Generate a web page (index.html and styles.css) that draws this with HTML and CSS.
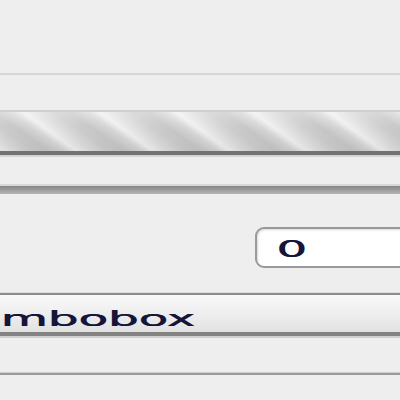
FILE: index.html
```html
<!DOCTYPE html>
<html lang="en">
<head>
    <meta charset="UTF-8">
    <meta name="viewport" content="width=device-width, initial-scale=1.0">
    <title>Widgets</title>
    <link rel="stylesheet" href="styles.css">
</head>
<body>

    <div class="page">
        <!-- top panel -->
        <div class="panel-top"></div>
        <div class="rule light"></div>

        <!-- busy progress bar -->
        <div class="progress">
            <div class="progress-fill"></div>
        </div>

        <!-- frame bottom edge -->
        <div class="frame-edge"></div>

        <!-- spin / text field -->
        <div class="field-row">
            <div class="field"><span class="stretch">0</span></div>
        </div>

        <!-- combobox -->
        <div class="rule dark"></div>
        <div class="combo">
            <span class="stretch combo-text">Combobox</span>
        </div>

        <div class="rule bottom"></div>
    </div>

</body>
</html>
```

FILE: styles.css
```css
body {
    margin: 0;
    background-color: #eeeeee;
    font-family: 'DejaVu Sans', Verdana, sans-serif;
    color: #15153a;
    overflow: hidden;
}

.page {
    width: 400px;
    height: 400px;
    overflow: hidden;
}

.panel-top {
    height: 73px;
}

.rule {
    height: 0;
}

.rule.light {
    border-top: 2px solid #d6d6d6;
}

.rule.dark {
    margin-top: 24px;
    border-top: 1px solid #dedede;
    border-bottom: 2px solid #8c8c8c;
}

.rule.bottom {
    margin-top: 36px;
    border-top: 1px solid #cfcfcf;
    border-bottom: 2px solid #9a9a9a;
}

.progress {
    margin-top: 35px;
    border-top: 2px solid #cfcfcf;
    border-bottom: 4px solid #727272;
    box-shadow: 0 2px 0 #d4d4d4;
}

.progress-fill {
    height: 39px;
    background:
        linear-gradient(to bottom, rgba(255, 255, 255, 0.3), rgba(255, 255, 255, 0) 40%, rgba(0, 0, 0, 0.05)),
        repeating-linear-gradient(36deg, #f0f0f0 0px, #dedede 9px, #cdcdcd 19px, #c7c7c7 28px, #d6d6d6 38px, #f0f0f0 45px);
}

.frame-edge {
    margin-top: 29px;
    height: 8px;
    border-top: 2px solid #d8d8d8;
    background: linear-gradient(to bottom, #858585, #b4b4b4);
}

.field-row {
    margin-top: 33px;
    padding-left: 255px;
}

.field {
    width: 180px;
    height: 37px;
    border: 2px solid #9a9a9a;
    border-radius: 9px;
    background: #ffffff;
    box-shadow: inset 1px 1px 2px rgba(0, 0, 0, 0.15);
    padding-left: 19px;
    font-size: 23px;
    line-height: 40px;
    text-shadow: 0.5px 0 0 #15153a;
}

.stretch {
    display: inline-block;
    transform: scaleX(2.1);
    transform-origin: left center;
}

.combo {
    height: 33px;
    padding-top: 4px;
    border-bottom: 4px solid #838383;
    box-shadow: 0 2px 0 #d0d0d0;
    background: linear-gradient(to bottom, #f9f9f9, #ececec 60%, #e2e2e2);
    font-size: 21px;
    line-height: 40px;
    white-space: nowrap;
    text-shadow: 0.5px 0 0 #15153a;
}

.combo-text {
    margin-left: -63px;
    transform: scaleX(2.3);
}
```
